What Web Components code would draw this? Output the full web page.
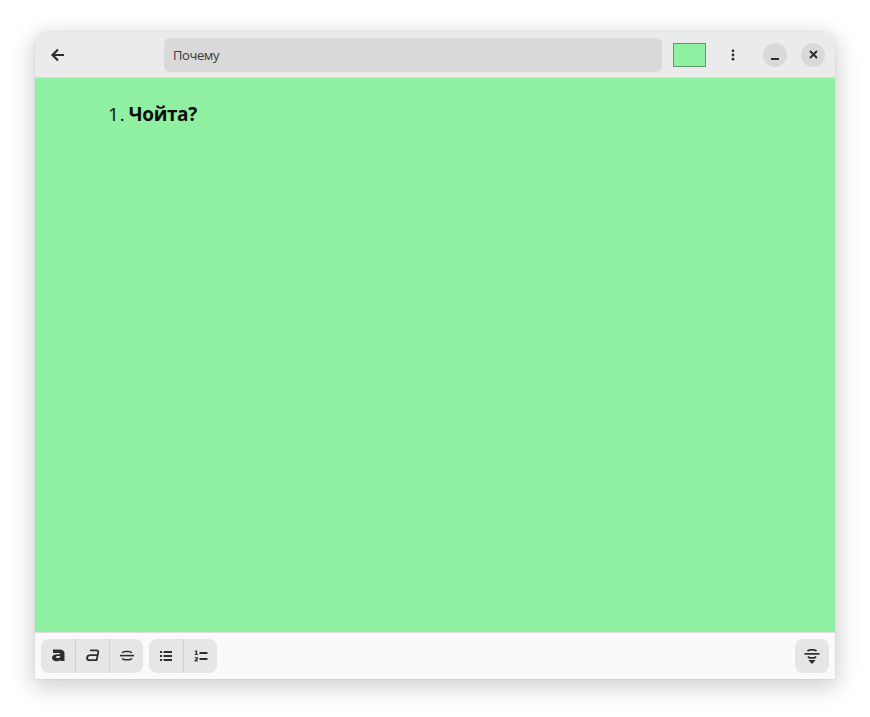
<!DOCTYPE html>
<html lang="ru">
<head>
<meta charset="utf-8">
<title>Почему</title>
<style>
    html, body { margin: 0; background: #fff; }
    body { padding: 32px 35px 38px; font-family: "Open Sans", "Noto Sans", sans-serif; }
</style>
</head>
<body>
<note-window>
    <note-header slot="header" title-text="Почему" color="#90f0a2"></note-header>
    <note-editor><ol start="1"><li>Чойта?</li></ol></note-editor>
    <note-toolbar slot="footer"></note-toolbar>
</note-window>

<script>
const ICONS = {
    back: `<path d="M8 2.500 2.500 8 8 13.500M3 8H14" fill="none" stroke="currentColor" stroke-width="2.200"/>`,
    menu: `<circle cx="8" cy="3.800" r="1.400"/><circle cx="8" cy="8" r="1.400"/><circle cx="8" cy="12.200" r="1.400"/>`,
    minimize: `<rect x="4" y="11" width="8" height="2"/>`,
    close: `<path d="m3.700 3.700 8.600 8.600m0-8.600-8.600 8.600" fill="none" stroke="currentColor" stroke-width="2.300"/>`,
    bold: `<path transform="translate(0 -1)" d="M3 2.500h6.500C12.500 2.500 14.500 3.800 14.500 6.500V14h-4l-.2-1.100c-.8.9-2.100 1.300-3.600 1.300-2.800 0-4.700-1.300-4.700-3.500 0-2.300 2-3.500 5-3.500h3.200c-.1-.9-.8-1.300-2.200-1.300H3Zm5 6.600c-1.200 0-2 .3-2 1s.7 1 1.700 1c1.300 0 2.400-.5 2.600-2Z"/>`,
    italic: `<path d="M5 2.400h6.200c1.600 0 2.300.8 2 2.100L11.600 12.100H4.500c-1.800 0-2.800-.9-2.500-2.300C2.300 8.300 3.500 7.200 5.300 7.200h7.200" fill="none" stroke="currentColor" stroke-width="1.800"/>`,
    strike: `<path d="M3.200 4.900c.6-.9 1.700-1.400 3.300-1.400h3c1.600 0 2.700.5 3.300 1.400" fill="none" stroke="currentColor" stroke-width="1.600"/><rect x="1" y="6.800" width="14" height="1.600"/><path d="M3.200 10.300c.6 1 1.700 1.500 3.300 1.500h3c1.600 0 2.700-.5 3.300-1.500" fill="none" stroke="currentColor" stroke-width="1.600"/>`,
    bullets: `<rect x="2" y="3" width="2" height="2"/><rect x="2" y="7" width="2" height="2"/><rect x="2" y="11" width="2" height="2"/><rect x="5.500" y="3" width="8.500" height="2"/><rect x="5.500" y="7" width="8.500" height="2"/><rect x="5.500" y="11" width="8.500" height="2"/>`,
    numbers: `<path d="M2.600 2.500h1.500v3.600h1V7H1.700v-.9h1V3.500l-1 .3v-.8ZM1.600 9.300h3.400v2l-1.900 1.100h1.900v1H1.600v-1.500l2-1.200v-.5h-2Z"/><rect x="6.500" y="4" width="8" height="2"/><rect x="6.500" y="10" width="8" height="2"/>`,
    heading: `<path d="M3.500 3.300C4.100 2.300 5.200 1.900 6.500 1.900h3c1.300 0 2.400.4 3 1.400" fill="none" stroke="currentColor" stroke-width="1.700"/><rect x="0.500" y="5" width="15" height="1.700"/><path d="M4 8.500C4.500 9.400 5.500 9.900 6.500 9.900h3c1 0 2-.5 2.500-1.400" fill="none" stroke="currentColor" stroke-width="1.700"/><path d="M4.300 12h7.400L8 16Z"/>`
};

class NoteIcon extends HTMLElement {
    constructor() {
        super();
        this.shadowDOM = this.attachShadow({ mode: "open" });
    }

    connectedCallback() {
        const size = this.getAttribute("size") || 16;
        this.shadowDOM.innerHTML = `
        <style>
        :host { display: inline-flex; color: #2e2e2e; }
        svg { display: block; fill: currentColor; }
        </style>
        <svg width="${size}" height="${size}" viewBox="0 0 16 16">${ICONS[this.getAttribute("name")]}</svg>
        `;
    }
}

class NoteWindow extends HTMLElement {
    constructor() {
        super();
        this.shadowDOM = this.attachShadow({ mode: "open" });
    }

    connectedCallback() {
        this.shadowDOM.innerHTML = `
        <style>
        :host {
            display: flex;
            flex-direction: column;
            width: 800px;
            height: 647px;
            border-radius: 12px 12px 0 0;
            box-shadow: 0 6px 24px 2px rgba(0, 0, 0, 0.2), 0 0 0 1px rgba(0, 0, 0, 0.03);
            overflow: hidden;
        }
        .body { flex: 1; display: flex; min-height: 0; }
        </style>
        <slot name="header"></slot>
        <div class="body"><slot></slot></div>
        <slot name="footer"></slot>
        `;
    }
}

class NoteHeader extends HTMLElement {
    constructor() {
        super();
        this.shadowDOM = this.attachShadow({ mode: "open" });
    }

    connectedCallback() {
        this.shadowDOM.innerHTML = `
        <style>
        :host {
            display: flex;
            align-items: center;
            box-sizing: border-box;
            height: 46px;
            padding: 0 10px 0 6px;
            background: #ebebeb;
            border-bottom: 1px solid #dcdcdc;
            flex: none;
        }
        .button {
            width: 34px;
            height: 34px;
            display: flex;
            align-items: center;
            justify-content: center;
            flex: none;
        }
        .title {
            width: 489px;
            height: 34px;
            margin-left: 89px;
            padding-left: 9px;
            display: flex;
            align-items: center;
            background: #d9d9d9;
            border-radius: 6px;
            font-size: 13px;
            letter-spacing: -0.4px;
            color: #3a3a3a;
            flex: none;
        }
        .swatch {
            box-sizing: border-box;
            width: 33px;
            height: 24px;
            margin-left: 11px;
            background: ${this.getAttribute("color")};
            border: 1px solid #5f9a6c;
            flex: none;
        }
        .menu { margin-left: 10px; }
        .round {
            width: 24px;
            height: 24px;
            border-radius: 50%;
            background: #d9d9d9;
            display: flex;
            align-items: center;
            justify-content: center;
            flex: none;
        }
        .minimize { margin-left: 13px; }
        .close { margin-left: 14px; }
        </style>
        <div class="button"><note-icon name="back"></note-icon></div>
        <div class="title">${this.getAttribute("title-text")}</div>
        <div class="swatch"></div>
        <div class="button menu"><note-icon name="menu"></note-icon></div>
        <div class="round minimize"><note-icon name="minimize"></note-icon></div>
        <div class="round close"><note-icon name="close" size="13"></note-icon></div>
        `;
    }
}

class NoteEditor extends HTMLElement {
    constructor() {
        super();
        this.shadowDOM = this.attachShadow({ mode: "open" });
    }

    connectedCallback() {
        const text = this.querySelector("li").textContent;
        this.shadowDOM.innerHTML = `
        <style>
        :host {
            display: block;
            flex: 1;
            background: #90f0a2;
            color: #0c0c0c;
            padding: 23px 0 0 73px;
            font-size: 19px;
            line-height: 26px;
        }
        .item { display: flex; gap: 3px; }
        .num { font-weight: 400; letter-spacing: 1px; }
        b { font-weight: 700; letter-spacing: -0.400px; }
        </style>
        <div class="item"><span class="num">1.</span><b>${text}</b></div>
        `;
    }
}

class ToolGroup extends HTMLElement {
    constructor() {
        super();
        this.shadowDOM = this.attachShadow({ mode: "open" });
    }

    connectedCallback() {
        this.shadowDOM.innerHTML = `
        <style>
        :host {
            display: flex;
            height: 34px;
            border-radius: 8px;
            background: #e6e6e6;
            overflow: hidden;
        }
        </style>
        <slot></slot>
        `;
    }
}

class ToolButton extends HTMLElement {
    constructor() {
        super();
        this.shadowDOM = this.attachShadow({ mode: "open" });
    }

    connectedCallback() {
        this.shadowDOM.innerHTML = `
        <style>
        :host {
            display: flex;
            align-items: center;
            justify-content: center;
            width: 34px;
            height: 34px;
            box-sizing: border-box;
        }
        :host(:not(:first-child)) { border-left: 1px solid #d0d0d0; }
        </style>
        <note-icon name="${this.getAttribute("icon")}"></note-icon>
        `;
    }
}

class NoteToolbar extends HTMLElement {
    constructor() {
        super();
        this.shadowDOM = this.attachShadow({ mode: "open" });
    }

    connectedCallback() {
        this.shadowDOM.innerHTML = `
        <style>
        :host {
            display: flex;
            align-items: center;
            gap: 6px;
            height: 47px;
            box-sizing: border-box;
            padding: 0 6px;
            background: #fafafa;
            border-top: 1px solid #dedede;
            flex: none;
        }
        .end { margin-left: auto; }
        </style>
        <tool-group>
            <tool-button icon="bold"></tool-button>
            <tool-button icon="italic"></tool-button>
            <tool-button icon="strike"></tool-button>
        </tool-group>
        <tool-group>
            <tool-button icon="bullets"></tool-button>
            <tool-button icon="numbers"></tool-button>
        </tool-group>
        <tool-group class="end">
            <tool-button icon="heading"></tool-button>
        </tool-group>
        `;
    }
}

customElements.define("note-icon", NoteIcon);
customElements.define("note-window", NoteWindow);
customElements.define("note-header", NoteHeader);
customElements.define("note-editor", NoteEditor);
customElements.define("tool-group", ToolGroup);
customElements.define("tool-button", ToolButton);
customElements.define("note-toolbar", NoteToolbar);
</script>
</body>
</html>
